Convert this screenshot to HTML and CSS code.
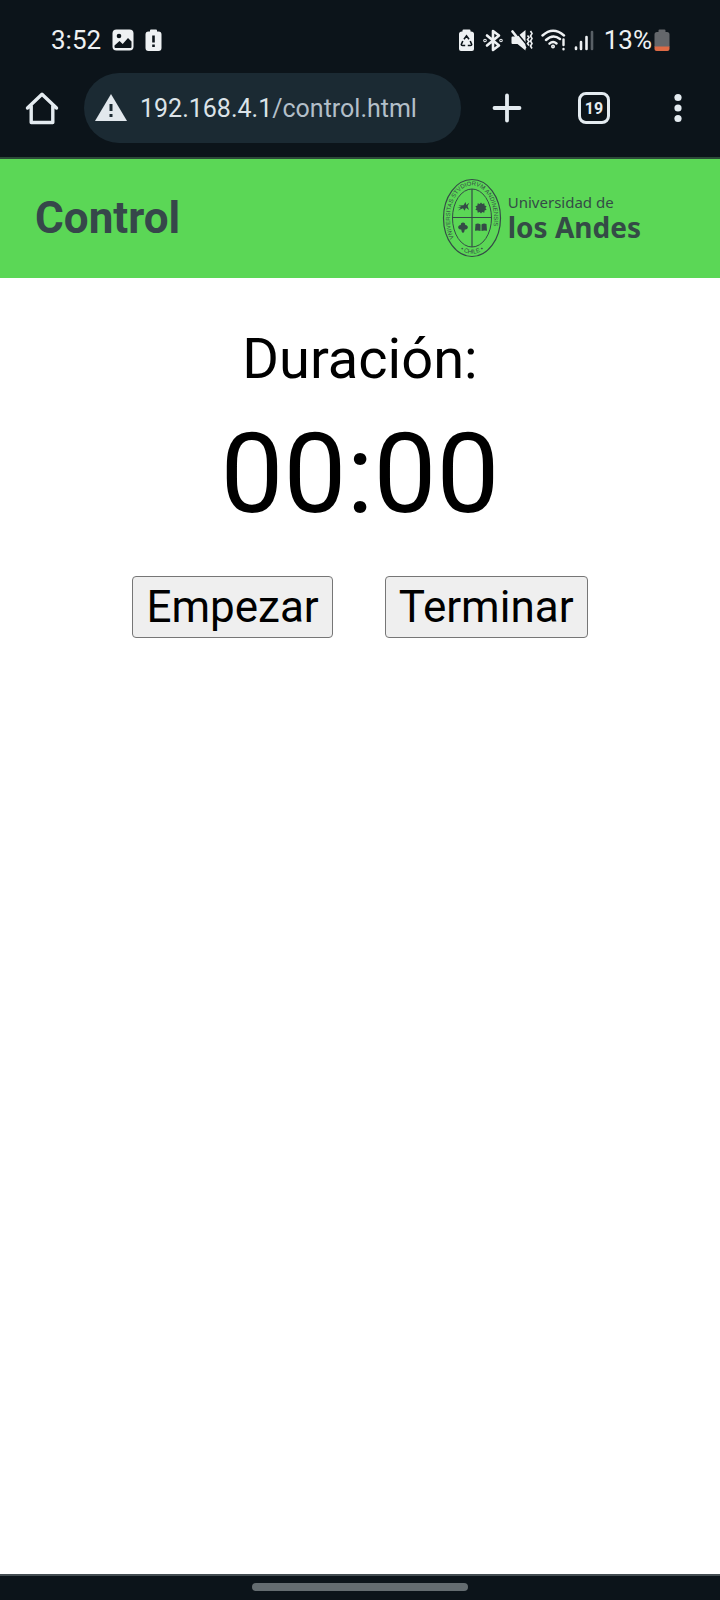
FILE: index.html
```html
<!DOCTYPE html>
<html lang="es">
<head>
<meta charset="utf-8">
<meta name="viewport" content="width=device-width, initial-scale=1">
<title>Control</title>
<link rel="stylesheet" href="styles.css">
</head>
<body class="screen">
<div class="chrome">
  <div class="status">
    <div class="status-left">
      <span class="clock">3:52</span>
      <svg width="22" height="22" viewBox="0 0 22 22"><rect x="0.5" y="0.5" width="21" height="21" rx="4" fill="#eef1f3"/><circle cx="7" cy="7" r="2.3" fill="#0c141a"/><path d="M2.5 16.5 7.5 12l3.2 3L16 9l3.500 3.600V18q0 1-1 1h-15q-1 0-1-1z" fill="#0c141a"/></svg>
      <svg width="17" height="23" viewBox="0 0 17 23"><path d="M5 2.500V1.500q0-1 1-1h5q1 0 1 1v1h1.500q3 0 3 3V19q0 3-3 3h-10q-3 0-3-3V5.500q0-3 3-3z" fill="#eef1f3"/><path d="M7.200 6.500h2.600v7H7.200zM7.200 15.500h2.600v2.600H7.200z" fill="#0c141a"/></svg>
    </div>
    <div class="status-right">
      <svg width="17" height="23" viewBox="0 0 17 23"><path d="M4.500 2.500V1.500q0-1 1-1h6q1 0 1 1v1h.5q3 0 3 2.500V20q0 2-2 2H3q-2 0-2-2V5q0-2.500 3-2.500z" fill="#eef1f3"/><path d="M6 10.200 8.500 6.800l2.500 3.400M12.200 12l1.500 3.500q0 1-1.200 1H9.800M7.200 16.500H4.500q-1.200 0-1.200-1L4.800 12" fill="none" stroke="#0c141a" stroke-width="1.600"/></svg>
      <svg width="20" height="23" viewBox="0 0 20 23" fill="none" stroke="#eef1f3" stroke-width="2.600" stroke-linejoin="round" stroke-linecap="round"><path d="M4 6.500l12 10-6 4.500V2l6 4.500-12 10"/><circle cx="2" cy="11.500" r=".5"/><circle cx="18" cy="11.500" r=".5"/></svg>
      <svg width="22" height="23" viewBox="0 0 22 23"><path d="M1.500 7.500h5L14.500 1v20.500l-8-6.500h-5q-1 0-1-1V8.500q0-1 1-1z" fill="#eef1f3"/><path d="M4 1.500 16 16" stroke="#0c141a" stroke-width="1.400"/><path d="M1.500 2.500 14 18.500" stroke="#eef1f3" stroke-width="2.600" stroke-linecap="round"/><path d="M16.500 6.500l1.500 2-1.500 2 1.500 2-1.500 2 1.500 2M19.500 2l1.500 2.500-1.500 2.500 1.500 2.500-1.500 2.500 1.500 2.500-1.500 2.500 1.500 2.500" fill="none" stroke="#eef1f3" stroke-width="1.600"/></svg>
      <svg width="25" height="23" viewBox="0 0 25 23" fill="none" stroke="#eef1f3" stroke-width="2.400" stroke-linecap="round"><path d="M1.500 6.500Q12 -3 23 6.500M5 11Q12 4.500 19 10M8.500 14.700Q12 11.500 15.500 14.500"/><circle cx="12" cy="17.500" r=".8"/><path d="M22.500 10.500v5.500M22.500 20v.2"/></svg>
      <svg width="20" height="23" viewBox="0 0 20 23" stroke-width="2.600" stroke-linecap="round"><path d="M2 18.500v1.500M7 13v7M12.500 8v12" stroke="#eef1f3"/><path d="M18 3v17" stroke="#596066"/></svg>
      <span class="battery-level">13%</span>
      <svg width="16" height="23" viewBox="0 0 16 23"><path d="M4.500 3V1.500q0-1 1-1h5q1 0 1 1V3H13q2.500 0 2.500 2.500V18H.5V5.500Q.5 3 3 3z" fill="#64676b"/><path d="M.5 17.500h15V20q0 2-2 2h-11q-2 0-2-2z" fill="#dd6b46"/></svg>
    </div>
  </div>
  <div class="toolbar">
    <button class="tool" aria-label="Inicio"><svg width="34" height="34" viewBox="0 0 34 34" fill="none" stroke="#e4ebf0" stroke-width="3.400" stroke-linejoin="round" stroke-linecap="round"><path d="M2.500 17 17 3.200 31.500 17M6.200 15v16.500h21.600V15"/></svg></button>
    <div class="address">
      <svg width="32" height="30" viewBox="0 0 32 30"><path d="M16 0 32 27H0z" fill="#e2e8ed"/><path d="M14.500 10h3v7h-3zM14.500 20h3v3h-3z" fill="#1b2a33"/></svg>
      <span class="url">192.168.4.1<span class="path">/control.html</span></span>
    </div>
    <button class="tool" aria-label="Nueva pestaña"><svg width="30" height="30" viewBox="0 0 30 30" stroke="#e4ebf0" stroke-width="3.800" stroke-linecap="round"><path d="M15 2.500v25M2.500 15h25"/></svg></button>
    <button class="tool tabs" aria-label="19 pestañas">19</button>
    <button class="tool" aria-label="Menú"><svg width="8" height="30" viewBox="0 0 8 30" fill="#e4ebf0"><circle cx="4" cy="4.500" r="3.600"/><circle cx="4" cy="15" r="3.600"/><circle cx="4" cy="25.500" r="3.600"/></svg></button>
  </div>
</div>
<header class="banner">
  <h1 class="title">Control</h1>
  <div class="brand">
    <svg width="60" height="80" viewBox="0 0 60 80" fill="none" stroke="#344b46">
      <ellipse cx="30" cy="40" rx="28.500" ry="38.500" stroke-width="1.200"/>
      <ellipse cx="30" cy="40" rx="19.500" ry="29" stroke-width="1"/>
      <path d="M30 11v58M10.500 39.500h39" stroke-width="1.200"/>
      <path id="ring" d="M12 60.200A22 32.500 0 0 1 8 40A22 32.500 0 0 1 52 40A22 32.500 0 0 1 45 63.800" stroke="none"/>
      <path id="base" d="M13 66.800A25.800 35.600 0 0 0 47 66.800" stroke="none"/>
      <g class="seal-text" fill="#344b46" stroke="none">
        <text><textPath href="#ring">VNIVERSITAS STVDIORVM ANDINENSIS</textPath></text>
        <text text-anchor="middle"><textPath href="#base" startOffset="50%">• CHILE •</textPath></text>
      </g>
      <g fill="#344b46" stroke="none">
        <path d="M15 29.500l4.500-.5-3-1.500 5-.3 2-3.200.8 3 3-2.200-1.700 3.200 1.400 4-3-2.300-1.500 3-1.500-2.400-5 2.200 2.700-2.500z"/>
        <path d="M39 24.500l1.300 1.500 2-.7.300 2.100 2 .9-1.200 1.700 1.200 1.800-2 .8-.3 2.100-2-.6-1.300 1.500-1.300-1.500-2 .6-.3-2.100-2-.8 1.200-1.800-1.200-1.700 2-.9.3-2.100 2 .7z"/>
        <path d="M21 44.500q2.500 0 2.200 2.500 3 .5 2.600 2.800-.5 2.200-3 1.700-.3 3-1.800 3.500-1.500-.5-1.800-3.500-2.500.5-3-1.700-.4-2.300 2.600-2.800Q18.500 44.500 21 44.500z"/>
        <path d="M33.500 46q3-1 5 .5v6.500q-2-1-5.500-.3zM39.500 46.500q2-1.500 5-.5l.5 6.700q-3.500-.7-5.500.3z"/>
      </g>
    </svg>
    <div class="brand-name"><span class="brand-top">Universidad de</span><span class="brand-main">los Andes</span></div>
  </div>
</header>
<main class="content">
  <p class="label">Duración:</p>
  <p class="timer">00:00</p>
  <div class="actions">
    <button class="action">Empezar</button>
    <button class="action">Terminar</button>
  </div>
</main>
<div class="gesture"><span class="handle"></span></div>
</body>
</html>
```
FILE: styles.css
```css
* { box-sizing: border-box; }
.screen {
  margin: 0;
  min-height: 100vh;
  display: flex;
  flex-direction: column;
  background: #fff;
  color: #000;
  font-family: Roboto, sans-serif;
}
.screen svg { display: block; flex: none; }
.chrome {
  background: #0c141a;
  border-bottom: 2px solid #2c4a38;
  padding-bottom: 14px;
}
.status {
  display: flex;
  justify-content: space-between;
  align-items: center;
  height: 73px;
  padding: 7px 50px 0 51px;
  color: #eef1f3;
  font-size: 26px;
  line-height: 30px;
}
.status-left, .status-right { display: flex; align-items: center; }
.status-left { gap: 11px; }
.status-right { gap: 8px; }
.battery-level { margin: 0 -6px 0 2px; }
.toolbar {
  display: flex;
  align-items: center;
  height: 70px;
  padding: 0 38px 0 25px;
}
.tool {
  display: flex;
  align-items: center;
  justify-content: center;
  flex: none;
  padding: 0;
  border: 0;
  background: none;
  color: #e4ebf0;
}
.address {
  display: flex;
  align-items: center;
  flex: 1;
  min-width: 0;
  height: 70px;
  margin: 0 31px 0 25px;
  padding: 2px 12px 0 11px;
  gap: 13px;
  border-radius: 35px;
  background: #1b2a33;
}
.url {
  color: #dce3e8;
  font-size: 25px;
  line-height: 32px;
  white-space: nowrap;
}
.path { color: #b3bfc9; }
.tabs {
  width: 32px;
  height: 32px;
  margin: 0 64px 0 56px;
  border: 3px solid #e4ebf0;
  border-radius: 8px;
  font: bold 16px Roboto, sans-serif;
}
.banner {
  display: flex;
  align-items: center;
  justify-content: space-between;
  min-height: 119px;
  padding: 0 79px 1px 35px;
  background: #5bd756;
}
.title {
  margin: 0;
  color: #36474a;
  font-size: 44px;
  line-height: 52px;
}
.brand { display: flex; align-items: center; gap: 6px; }
.seal-text { font: 6px "Liberation Sans", sans-serif; }
.brand-name {
  display: flex;
  flex-direction: column;
  color: #344b46;
  font-family: "Noto Sans", sans-serif;
}
.brand-top { font-size: 15px; line-height: 18px; }
.brand-main { font-size: 28px; font-weight: bold; line-height: 32px; }
.content { flex: 1; padding-top: 48px; text-align: center; }
.label { margin: 0; font-size: 56px; line-height: 66px; }
.timer { margin: 16px 0 0; font-size: 112px; line-height: 132px; }
.actions { display: flex; justify-content: center; gap: 52px; margin-top: 36px; }
.action {
  padding: 4px 13px;
  border: 1px solid #767676;
  border-radius: 4px;
  background: #efefef;
  color: #000;
  font: 44px/52px Roboto, sans-serif;
}
.gesture {
  display: flex;
  justify-content: center;
  align-items: center;
  height: 26px;
  padding-bottom: 2px;
  border-top: 2px solid #444d52;
  background: #0c141a;
}
.handle { width: 30%; height: 8px; border-radius: 4px; background: #646c70; }
```
